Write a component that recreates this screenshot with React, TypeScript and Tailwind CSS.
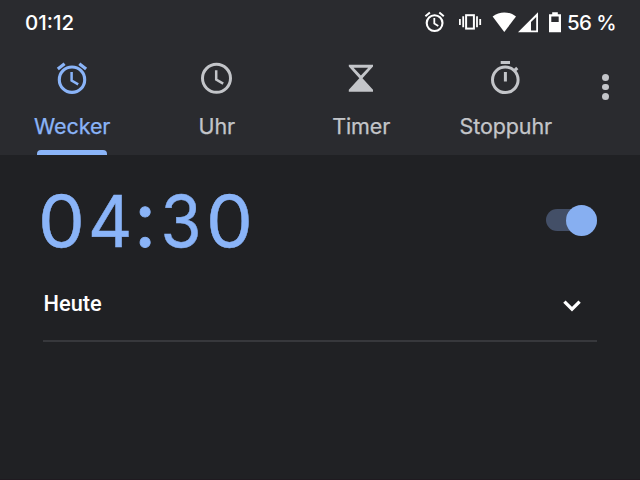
import type { ReactNode } from "react";

function AlarmIcon() {
  return (
    <svg width="32" height="36" viewBox="56 60 32 36" fill="none" stroke="currentColor">
      <circle cx="72" cy="79.7" r="12.7" strokeWidth="3.1" />
      <path d="M71.6 72v8.6l6.6 3.8" strokeWidth="2.5" />
      <path d="M57.8 69.1l6.8-5.4M79.3 63.7l6.8 5.4" strokeWidth="3.2" />
    </svg>
  );
}

function ClockIcon() {
  return (
    <svg width="32" height="36" viewBox="200.8 60 32 36" fill="none" stroke="currentColor">
      <circle cx="216.3" cy="78.3" r="14" strokeWidth="3" />
      <path d="M216 70.3v9.3l7 4.1" strokeWidth="2.5" />
    </svg>
  );
}

function HourglassIcon() {
  return (
    <svg width="32" height="36" viewBox="345 60 32 36" fill="currentColor">
      <path
        fillRule="evenodd"
        d="M348.8 64.8H373V66.6L362.5 78.2L373 89.8V91.8H348.8V89.8L359.3 78.2L348.8 66.6ZM353.6 67.7L360.9 75.6L368.2 67.7Z"
      />
    </svg>
  );
}

function StopwatchIcon() {
  return (
    <svg width="32" height="36" viewBox="490 60 32 36" fill="none" stroke="currentColor">
      <circle cx="505.3" cy="79.8" r="12.8" strokeWidth="3" />
      <path d="M500.7 62.6h9.3M505.4 72v9.4" strokeWidth="3" />
      <path d="M513.6 71.4l3.7-3.4" strokeWidth="3.2" />
    </svg>
  );
}

function StatusIcons() {
  return (
    <svg className="shrink-0" width="140" height="24" viewBox="424 10.7 140 24" fill="none" stroke="currentColor">
      <circle cx="434.6" cy="22.8" r="7.9" strokeWidth="2.1" />
      <path d="M434.3 17.7v5.6l4 2.4" strokeWidth="1.8" />
      <path d="M425.4 15.9l4.5-3.7M439.3 12.2l4.5 3.7" strokeWidth="2" />
      <rect x="466.1" y="14.9" width="7.8" height="13.4" strokeWidth="2" />
      <path d="M463.2 16v11M459.9 18.6v6M477 16v11M480.2 18.6v6" strokeWidth="1.8" />
      <path d="M492.6 16.2C499.5 10.7 509 10.7 516 16.2L504.3 31.6Z" fill="currentColor" stroke="none" />
      <path
        d="M538 12V32H518ZM536.2 16.6L531 21.8V30.2H536.2Z"
        fill="currentColor"
        fillRule="evenodd"
        stroke="none"
      />
      <path
        d="M552.2 12H557.8V14H561V32H549V14H552.2ZM551.3 16.2V21.7H558.7V16.2Z"
        fill="currentColor"
        fillRule="evenodd"
        stroke="none"
      />
    </svg>
  );
}

function Tab({ icon, label, active = false }: { icon: ReactNode; label: ReactNode; active?: boolean }) {
  return (
    <button
      className={`flex w-[144.5px] flex-col items-center pt-[15px] ${active ? "text-[#8ab4f8]" : "text-[#c3c5c9]"}`}
    >
      {icon}
      <span className="mt-[15px] flex h-[30px] items-center whitespace-nowrap text-[21.5px] leading-[30px] tracking-[-0.1px] [-webkit-text-stroke:0.25px]">
        {label}
      </span>
      {active && <span className="mt-[9px] h-[5px] w-[70px] rounded-t-[4px] bg-[#8ab4f8]" />}
    </button>
  );
}

export default function App() {
  return (
    <div className="flex h-[480px] w-[640px] flex-col overflow-hidden border-b border-[#1f1a20] bg-[#202124] font-['Inter',sans-serif]">
      <header className="flex h-[155px] shrink-0 flex-col bg-[#2a2b2f]">
        <div className="flex h-[45px] items-center pt-px pr-[24px] pl-[25px] text-[20.5px] font-medium text-white">
          <span>01:12</span>
          <span className="ml-auto flex items-center gap-[3px]">
            <StatusIcons />
            <span className="w-[49px] whitespace-nowrap tracking-[-0.6px]">56 %</span>
          </span>
        </div>
        <nav className="flex h-[110px]">
          <Tab active icon={<AlarmIcon />} label="Wecker" />
          <Tab icon={<ClockIcon />} label="Uhr" />
          <Tab icon={<HourglassIcon />} label="Timer" />
          <Tab icon={<StopwatchIcon />} label="Stoppuhr" />
          <button className="ml-[24px] flex h-[84px] flex-col items-center justify-center gap-[2.8px]">
            <span className="size-[6.6px] rounded-full bg-[#c3c5c9]" />
            <span className="size-[6.6px] rounded-full bg-[#c3c5c9]" />
            <span className="size-[6.6px] rounded-full bg-[#c3c5c9]" />
          </button>
        </nav>
      </header>
      <main className="mr-[43px] ml-[43px] flex h-[187px] shrink-0 flex-col border-b-2 border-[#37383c]">
        <div className="-ml-[7px] flex h-[130px] items-center justify-between">
          <div className="flex items-start pt-px text-[71.5px] leading-[80px] text-[#8ab4f8] [-webkit-text-stroke:0.5px]">
            <span className="w-[51px] scale-x-[1.04] text-center">0</span>
            <span className="w-[44px] scale-x-[0.96] text-center">4</span>
            <span className="-mt-[5px] w-[28px] text-center font-['Lato',sans-serif] text-[81px] [-webkit-text-stroke:0.8px]">:</span>
            <span className="w-[43px] scale-x-[0.93] text-center">3</span>
            <span className="w-[55px] scale-x-[1.04] text-center">0</span>
          </div>
          <div className="flex h-[22px] w-[51px] items-center justify-end rounded-full bg-[#434f67]">
            <span className="size-[31px] rounded-full bg-[#87aff1]" />
          </div>
        </div>
        <div className="flex h-[38px] items-center justify-between pr-[16px] pl-[0.5px] text-white">
          <span className="font-['Roboto',sans-serif] text-[21.8px] font-medium">Heute</span>
          <svg className="mt-[3px]" width="18" height="12" viewBox="0 0 18 12" fill="none" stroke="currentColor" strokeWidth="3.3">
            <path d="M1.4 1.7L9 9.2L16.6 1.7" />
          </svg>
        </div>
      </main>
    </div>
  );
}
